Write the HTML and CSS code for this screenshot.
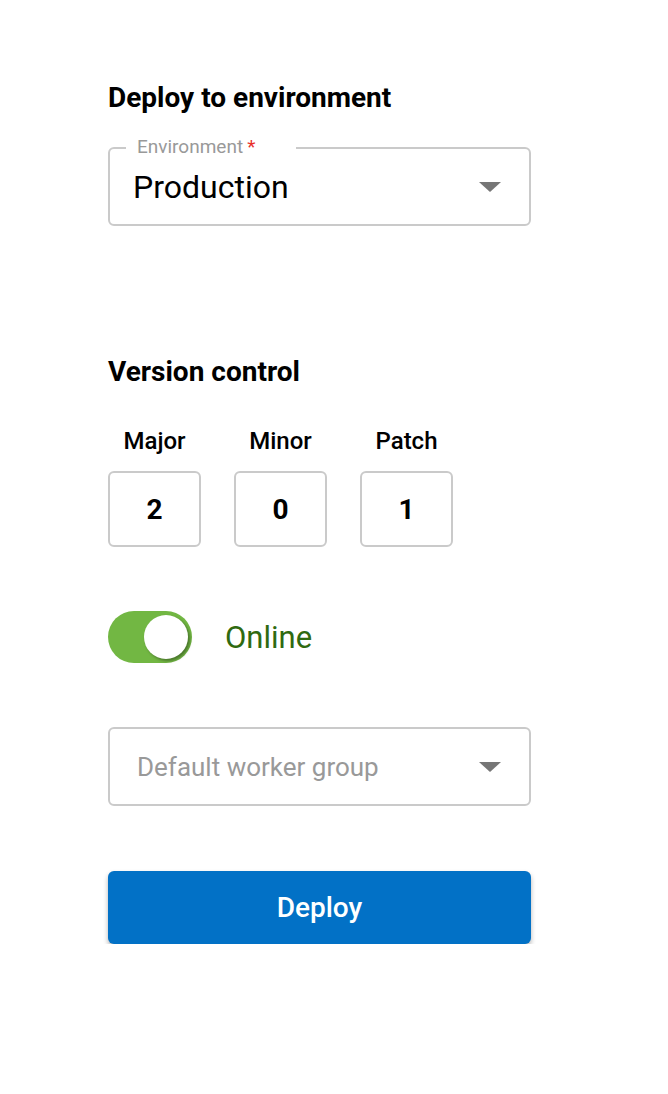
FILE: index.html
```html
<!DOCTYPE html>
<html lang="en">
  <head>
    <meta charset="UTF-8" />
    <meta name="viewport" content="width=device-width, initial-scale=1.0" />
    <title>Deploy</title>
    <link rel="stylesheet" href="styles.css">
  </head>
  <body>
    <div class="panel">
      <h2 class="section-title">Deploy to environment</h2>

      <div class="select">
        <span class="select-label">Environment<span class="required">*</span></span>
        <span class="select-value">Production</span>
        <span class="caret"></span>
      </div>

      <h2 class="section-title version-title">Version control</h2>

      <div class="versions">
        <div class="version">
          <span class="version-name">Major</span>
          <div class="version-box">2</div>
        </div>
        <div class="version">
          <span class="version-name">Minor</span>
          <div class="version-box">0</div>
        </div>
        <div class="version">
          <span class="version-name">Patch</span>
          <div class="version-box">1</div>
        </div>
      </div>

      <div class="status">
        <div class="toggle"><span class="thumb"></span></div>
        <span class="status-text">Online</span>
      </div>

      <div class="select worker">
        <span class="select-placeholder">Default worker group</span>
        <span class="caret"></span>
      </div>

      <button class="deploy">Deploy</button>
    </div>
  </body>
</html>
```

FILE: styles.css
```css
body {
  margin: 0;
  padding: 0;
  background-color: #fff;
  font-family: Roboto, "Liberation Sans", Arial, sans-serif;
  color: #000;
}
.panel {
  width: 423px;
  margin-left: 108px;
  padding-top: 83px;
}
.section-title {
  margin: 0;
  font-size: 28px;
  line-height: 30px;
  font-weight: 700;
}
.select {
  position: relative;
  box-sizing: border-box;
  height: 79px;
  margin-top: 34px;
  border: 2px solid #cacaca;
  border-radius: 6px;
  display: flex;
  align-items: center;
  justify-content: space-between;
  padding: 0 28px 0 23px;
}
.select-label {
  position: absolute;
  top: -12px;
  left: 16px;
  width: 159px;
  padding-left: 11px;
  background: #fff;
  font-size: 19px;
  line-height: 20px;
  color: #999;
}
.required {
  color: #e8302a;
  margin-left: 4px;
}
.select-value {
  font-size: 32px;
}
.caret {
  width: 0;
  height: 0;
  border-left: 11px solid transparent;
  border-right: 11px solid transparent;
  border-top: 10px solid #767676;
}
.version-title {
  margin-top: 131px;
}
.versions {
  display: flex;
  gap: 33px;
  margin-top: 41px;
}
.version {
  display: flex;
  flex-direction: column;
  align-items: center;
  gap: 17px;
}
.version-name {
  font-size: 24px;
  line-height: 26px;
  font-weight: 500;
}
.version-box {
  box-sizing: border-box;
  width: 93px;
  height: 76px;
  border: 2px solid #cacaca;
  border-radius: 6px;
  display: flex;
  align-items: center;
  justify-content: center;
  font-size: 28px;
  font-weight: 700;
}
.status {
  display: flex;
  align-items: center;
  gap: 33px;
  margin-top: 64px;
}
.toggle {
  box-sizing: border-box;
  width: 84px;
  height: 52px;
  border-radius: 26px;
  background-color: #72b743;
  display: flex;
  align-items: center;
  justify-content: flex-end;
  padding-right: 4px;
}
.thumb {
  width: 44px;
  height: 44px;
  border-radius: 50%;
  background: #fff;
  box-shadow: 2px 2px 3px rgba(0, 0, 0, 0.35);
}
.status-text {
  font-size: 31px;
  color: #2f6a10;
}
.worker {
  margin-top: 64px;
  padding-left: 27px;
}
.select-placeholder {
  font-size: 26px;
  color: #999;
}
.deploy {
  display: block;
  width: 100%;
  height: 73px;
  margin-top: 65px;
  border: none;
  border-radius: 6px;
  background-color: #0271c6;
  color: #fff;
  font-family: inherit;
  font-size: 28px;
  font-weight: 500;
  box-shadow: 0 3px 5px rgba(0, 0, 0, 0.3);
  cursor: pointer;
}
```
